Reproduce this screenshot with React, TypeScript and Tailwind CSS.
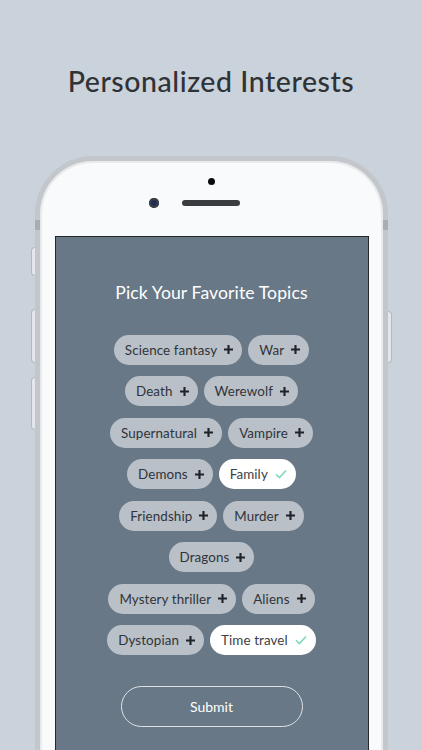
import React from "react";

type Topic = { label: string; picked?: boolean };

const rows: Topic[][] = [
  [{ label: "Science fantasy" }, { label: "War" }],
  [{ label: "Death" }, { label: "Werewolf" }],
  [{ label: "Supernatural" }, { label: "Vampire" }],
  [{ label: "Demons" }, { label: "Family", picked: true }],
  [{ label: "Friendship" }, { label: "Murder" }],
  [{ label: "Dragons" }],
  [{ label: "Mystery thriller" }, { label: "Aliens" }],
  [{ label: "Dystopian" }, { label: "Time travel", picked: true }],
];

const Plus = () => (
  <svg width="9" height="9" viewBox="0 0 9 9" className="shrink-0">
    <path d="M4.5 0v9M0 4.5h9" stroke="#1f2226" strokeWidth="2.1" />
  </svg>
);

const Check = () => (
  <svg width="12" height="10" viewBox="0 0 12 10" className="shrink-0">
    <path d="M1 5.2l3.4 3.4L11 1.5" fill="none" stroke="#7fd9bd" strokeWidth="1.6" />
  </svg>
);

function Chip({ t }: { t: Topic }) {
  return (
    <div
      className={`flex h-[30px] items-center gap-[7px] rounded-full pl-[11px] pr-[9px] text-[13.4px] tracking-[0.1px] ${
        t.picked ? "bg-white text-[#3d4146]" : "bg-[#b9c0c8] text-[#30343a]"
      }`}
    >
      <span className="pt-[1.5px] leading-none">{t.label}</span>
      {t.picked ? <Check /> : <Plus />}
    </div>
  );
}

function SideKey({ side, h }: { side: "l" | "r"; h: string }) {
  return (
    <div
      className={`w-[4px] border border-[#b5b9be] bg-[#e4e7ea] ${h} ${
        side === "l" ? "rounded-l-sm border-r-0" : "rounded-r-sm border-l-0"
      }`}
    />
  );
}

export default function App() {
  return (
    <div
      className="flex h-[750px] w-[422px] flex-col items-center overflow-hidden bg-[#cad2db]"
      style={{ fontFamily: "Lato, 'Open Sans', sans-serif" }}
    >
      <h1 className="mt-[62px] text-[28.5px] font-medium leading-[38px] tracking-[0.55px] text-[#2f3236]">
        Personalized Interests
      </h1>

      {/* handset */}
      <div className="relative mt-[56px] w-[353px] shrink-0 rounded-t-[58px] border-[5px] border-b-0 border-[#c3c6ca] bg-[#f9fafb] shadow-[inset_0_0_0_2px_#e9eaec]">
        {/* antenna bands */}
        <div className="absolute -left-[5px] top-[59px] h-[10px] w-[5px] bg-[#a9acb0]" />
        <div className="absolute -right-[5px] top-[59px] h-[10px] w-[5px] bg-[#a9acb0]" />
        {/* mute switch and volume keys */}
        <div className="absolute -left-[9px] top-[86px] flex flex-col">
          <SideKey side="l" h="h-[29px]" />
          <div className="h-[33px]" />
          <SideKey side="l" h="h-[54px]" />
          <div className="h-[14px]" />
          <SideKey side="l" h="h-[53px]" />
        </div>
        {/* power key */}
        <div className="absolute -right-[9px] top-[150px]">
          <SideKey side="r" h="h-[52px]" />
        </div>

        {/* sensors */}
        <div className="flex h-[75px] flex-col items-center pt-[17px]">
          <div className="h-[7px] w-[7px] rounded-full bg-[#0b0b0c]" />
          <div className="relative mt-[15px] h-[6px] w-[58px] rounded-full bg-[#3a3c3f]">
            <div className="absolute -left-[33px] -top-[2px] flex h-[10px] w-[10px] items-center justify-center rounded-full bg-[#2a3040] shadow-[inset_0_0_0_2px_#3b3f46]">
              <div className="h-[4px] w-[4px] rounded-full bg-[#1c2a6a]" />
            </div>
          </div>
        </div>

        {/* screen */}
        <div className="ml-[15px] mr-[14px] flex h-[520px] flex-col items-center border border-b-0 border-[#23272c] bg-[#697886] pt-[44px]">
          <h2 className="text-[17.6px] leading-[24px] tracking-[0.1px] text-white">Pick Your Favorite Topics</h2>
          <div className="mt-[29.5px] flex flex-col items-center gap-[11.5px]">
            {rows.map((row, i) => (
              <div key={i} className="flex gap-[6px]">
                {row.map((t) => (
                  <Chip key={t.label} t={t} />
                ))}
              </div>
            ))}
          </div>
          <button className="mt-[31px] h-[41px] w-[182px] rounded-full border border-[#dfe3e8] text-[14px] text-white">
            Submit
          </button>
        </div>
      </div>
    </div>
  );
}
